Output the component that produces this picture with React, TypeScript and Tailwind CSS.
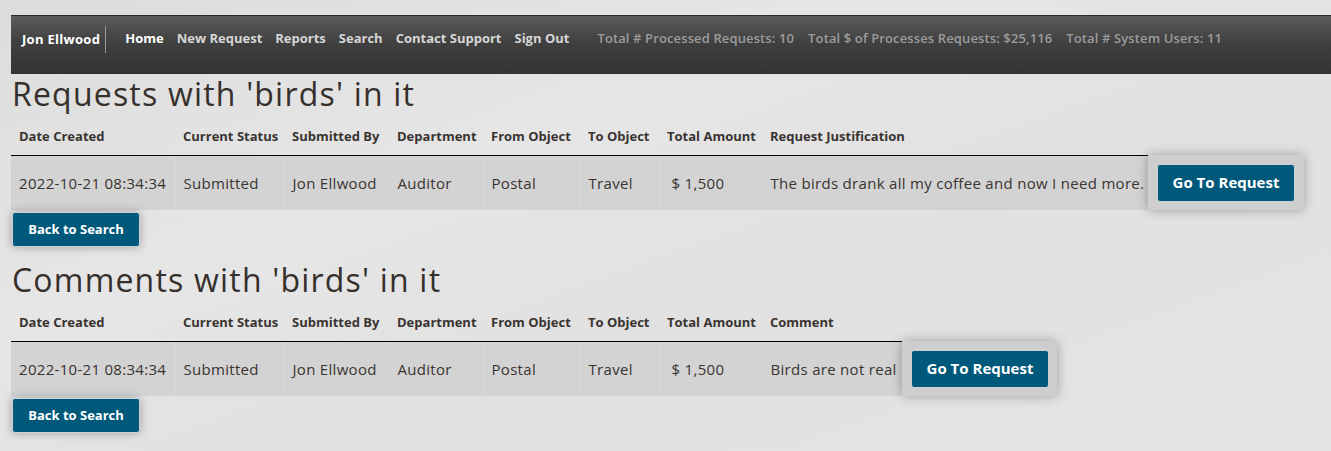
import React from "react";

const font = { fontFamily: '"Open Sans", "Liberation Sans", sans-serif' };

const cols = [
  { label: "Date Created", w: "w-[164px]" },
  { label: "Current Status", w: "w-[109px]" },
  { label: "Submitted By", w: "w-[105px]" },
  { label: "Department", w: "w-[94px]" },
  { label: "From Object", w: "w-[97px]" },
  { label: "To Object", w: "w-[79px]" },
  { label: "Total Amount", w: "w-[103px]" },
];

const values = ["2022-10-21 08:34:34", "Submitted", "Jon Ellwood", "Auditor", "Postal", "Travel", "$ 1,500"];

function ResultTable({
  lastLabel,
  lastValue,
  lastW,
  tableW,
  btnW,
}: {
  lastLabel: string;
  lastValue: string;
  lastW: string;
  tableW: string;
  btnW: string;
}) {
  return (
    <table className={`border-collapse table-fixed ${tableW}`}>
      <thead>
        <tr>
          {cols.map((c) => (
            <th
              key={c.label}
              className={`${c.w} h-[41px] align-bottom pb-[8px] px-[8px] text-left text-[13px] font-bold text-[#3a3431] border-b border-black whitespace-nowrap`}
            >
              {c.label}
            </th>
          ))}
          <th className={`${lastW} h-[41px] align-bottom pb-[8px] px-[8px] text-left text-[13px] font-bold text-[#3a3431] border-b border-black whitespace-nowrap`}>
            {lastLabel}
          </th>
          <th className={btnW}></th>
        </tr>
      </thead>
      <tbody>
        <tr>
          {values.map((v, i) => (
            <td
              key={i}
              className={`h-[55px] ${i === 6 ? "pl-[12px]" : "pl-[8px]"} pr-0 bg-[#d3d3d3] text-[15px] tracking-[0.3px] text-[#3a3431] whitespace-nowrap border-r border-[#d9d9d9]`}
            >
              {v}
            </td>
          ))}
          <td className="h-[55px] pl-[8px] pr-0 bg-[#d3d3d3] text-[15px] tracking-[0.3px] text-[#3a3431] whitespace-nowrap">{lastValue}</td>
          <td className="h-[55px] px-[9px] bg-[#cecece] rounded-[3px] shadow-[0_0_12px_rgba(0,0,0,0.3)]">
            <button className="w-[138px] h-[38px] bg-[#00587a] text-white text-[15px] font-bold rounded-[3px] border border-[#c9d3d8]">
              Go To Request
            </button>
          </td>
        </tr>
      </tbody>
    </table>
  );
}

function BackButton() {
  return (
    <button className="block mt-[2px] ml-[1px] w-[128px] h-[35px] bg-[#00587a] text-white text-[13px] font-bold rounded-[3px] border border-[#c9d3d8] shadow-[0_0_10px_rgba(0,0,0,0.3)]">
      Back to Search
    </button>
  );
}

export default function App() {
  const navItems = ["New Request", "Reports", "Search", "Contact Support", "Sign Out"];
  return (
    <div
      style={font}
      className="w-[1331px] h-[451px] overflow-hidden bg-[#e3e3e3] bg-[linear-gradient(160deg,#dcdcdc_0%,#e6e6e6_35%,#e1e1e1_60%,#e4e4e4_100%)] pt-[15px] pl-[11px]"
    >
      <nav className="h-[59px] border-t border-[#2a2a2a] bg-[linear-gradient(180deg,#5c5c5c_0%,#404040_45%,#333333_100%)] flex items-start pt-[9px]">
        <div className="flex items-center h-[28px]">
          <span className="pl-[11px] pr-[5px] text-[13px] tracking-[0.3px] font-bold text-white leading-[28px]">Jon Ellwood</span>
          <span className="w-[1px] h-[27px] bg-[#9a9a9a]"></span>
          <span className="ml-[19px] text-[13px] font-bold text-white">Home</span>
          {navItems.map((n) => (
            <span key={n} className="ml-[13px] text-[13px] font-bold text-[#d6d6d6]">
              {n}
            </span>
          ))}
          <span className="ml-[28px] text-[13px] tracking-[0.12px] font-semibold text-[#9c9c9c]">Total # Processed Requests: 10</span>
          <span className="ml-[14px] text-[13px] tracking-[0.12px] font-semibold text-[#9c9c9c]">Total $ of Processes Requests: $25,116</span>
          <span className="ml-[14px] text-[13px] tracking-[0.12px] font-semibold text-[#9c9c9c]">Total # System Users: 11</span>
        </div>
      </nav>

      <h1 className="h-[40px] leading-[40px] text-[32px] tracking-[1.2px] text-[#36302d] pl-[1px]">Requests with 'birds' in it</h1>
      <ResultTable
        lastLabel="Request Justification"
        lastValue="The birds drank all my coffee and now I need more."
        lastW="w-[386px]"
        tableW="w-[1293px]"
        btnW="w-[156px]"
      />
      <BackButton />

      <h2 className="mt-[13px] h-[40px] leading-[40px] text-[32px] tracking-[1.2px] text-[#36302d] pl-[1px]">Comments with 'birds' in it</h2>
      <ResultTable
        lastLabel="Comment"
        lastValue="Birds are not real"
        lastW="w-[140px]"
        tableW="w-[1046px]"
        btnW="w-[155px]"
      />
      <BackButton />
    </div>
  );
}
